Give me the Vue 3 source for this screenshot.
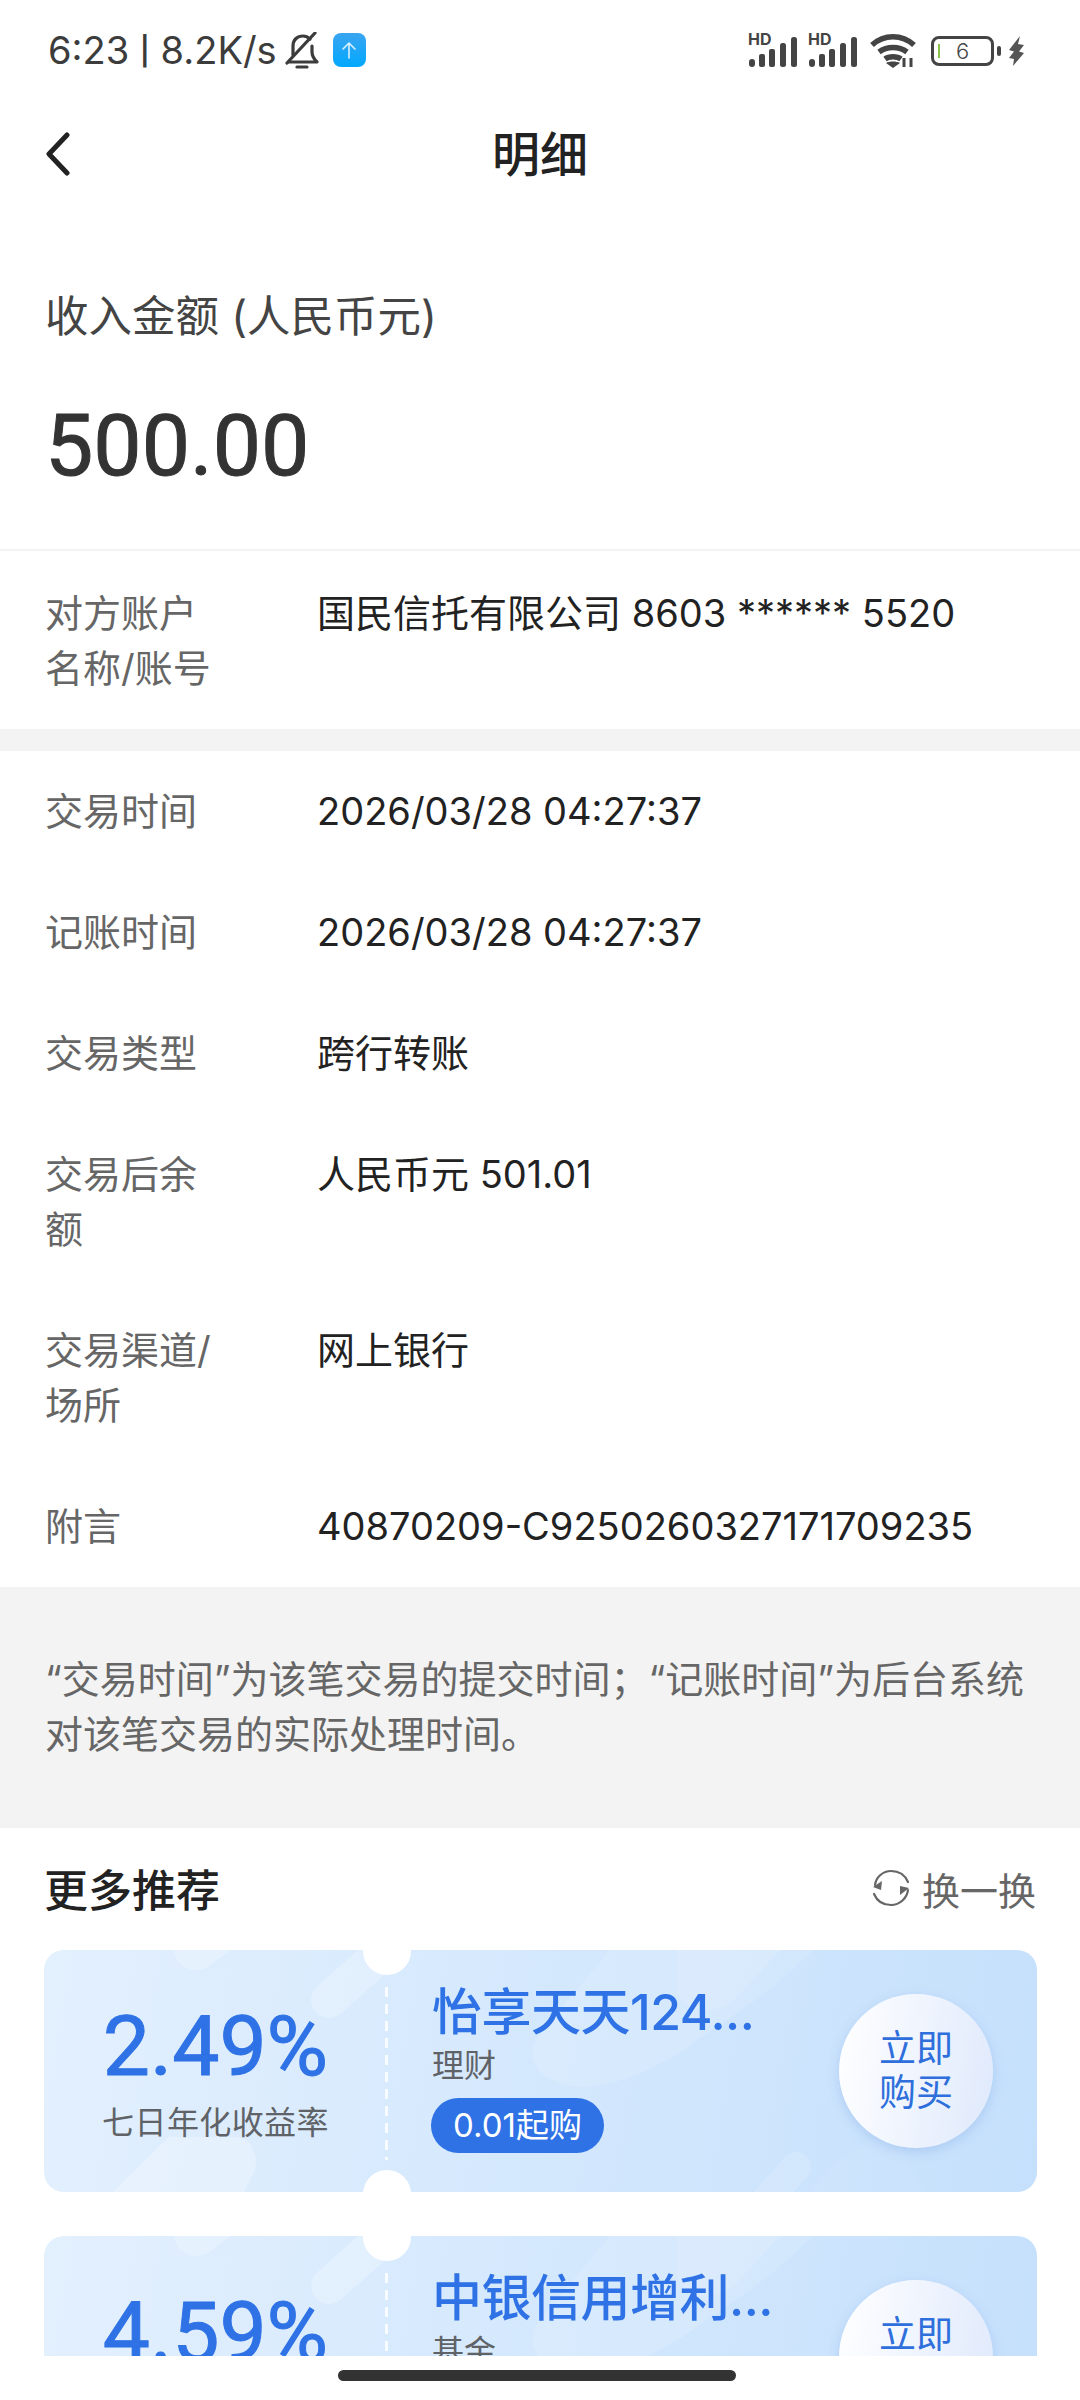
<template>
  <div class="page">
    <div class="status-bar">
      <div class="status-left">
        <span class="status-text">6:23 <span class="status-sep">|</span> 8.2K/s</span>
        <!-- muted bell -->
        <svg class="bell" width="34" height="37" viewBox="0 0 34 37" fill="none" stroke="#3c3c3c" stroke-width="3.2" stroke-linecap="round" stroke-linejoin="round">
          <path d="M4 30h28c-3-3-5-6-5-10v-6" />
          <path d="M8 23v-9C8 8 12 4 18 4c3 0 5 1 7 3" />
          <path d="M30 1L2 31" />
          <path d="M12 35h10" />
        </svg>
        <div class="upload-badge">
          <svg width="20" height="20" viewBox="0 0 20 20" fill="none" stroke="#d9f1ff" stroke-width="1.6" stroke-linecap="round" stroke-linejoin="round">
            <path d="M10 18V3M4 9l6-6 6 6" />
          </svg>
        </div>
      </div>
      <div class="status-right">
        <div v-for="n in 2" :key="n" class="signal">
          <span class="hd">HD</span>
          <svg width="48" height="30" viewBox="0 0 48 30" fill="#444">
            <rect x="0" y="22" width="6" height="8" rx="3" />
            <rect x="10" y="17" width="6" height="13" rx="2" />
            <rect x="20" y="12" width="6" height="18" rx="2" />
            <rect x="31" y="6" width="6" height="24" rx="2.5" />
            <rect x="42" y="0" width="6" height="30" rx="2.5" />
          </svg>
        </div>
        <svg class="wifi" width="46" height="34" viewBox="0 0 46 34" fill="none" stroke="#444" stroke-width="5.5">
          <path d="M2 11c12-11 30-11 42 0" />
          <path d="M9 18c8-6 20-6 28 0" />
          <path d="M15 25c4-3 12-3 16 0" />
          <path d="M23 34l-7-5c3-2 11-2 14 0z" fill="#444" stroke="none" />
          <path d="M34 24v9M41 24v9" stroke-width="3" />
        </svg>
        <div class="battery">
          <span class="battery-level"></span>
          <span class="battery-num">6</span>
          <span class="battery-cap"></span>
        </div>
        <svg class="bolt" width="17" height="30" viewBox="0 0 17 30" fill="#555">
          <path d="M12 0L1 14l5 1.5L1 22l5 1-1 7 11-13-5-1.5L16 9l-6-1z" />
        </svg>
      </div>
    </div>

    <div class="nav">
      <svg class="back" width="24" height="44" viewBox="0 0 24 44" fill="none" stroke="#222" stroke-width="5" stroke-linecap="round" stroke-linejoin="round">
        <path d="M21 3L3 22l18 19" />
      </svg>
      <h1 class="nav-title">明细</h1>
    </div>

    <section class="amount">
      <p class="amount-label">收入金额 (人民币元)</p>
      <p class="amount-value">500.00</p>
    </section>

    <section class="rows first-rows">
      <div class="row">
        <span class="row-label">对方账户<br />名称/账号</span>
        <span class="row-value">国民信托有限公司 8603 ****** 5520</span>
      </div>
    </section>

    <section class="rows detail-rows">
      <div v-for="row in rows" :key="row.label" class="row">
        <span class="row-label" v-html="row.label"></span>
        <span class="row-value">{{ row.value }}</span>
      </div>
    </section>

    <p class="note">“交易时间”为该笔交易的提交时间；“记账时间”为后台系统对该笔交易的实际处理时间。</p>

    <section class="recommend">
      <div class="recommend-head">
        <h2>更多推荐</h2>
        <div class="refresh">
          <svg width="38" height="38" viewBox="0 0 38 38" fill="none" stroke="#666" stroke-width="2.2" stroke-linecap="round">
            <path d="M3 16C4 8 11 2 19 2c8 0 14 4 17 11" />
            <path d="M36 21c-1 8-8 15-17 15-8 0-14-4-17-11" />
            <path d="M1 18l9-6-1 9z" fill="#666" stroke="none" />
            <path d="M37 19l-9 7 0-9z" fill="#666" stroke="none" />
          </svg>
          <span>换一换</span>
        </div>
      </div>

      <div v-for="card in cards" :key="card.name" class="card">
        <svg class="card-bg" width="993" height="242" viewBox="0 0 993 242" fill="#fff">
          <line x1="152" y1="-2" x2="190" y2="-30" stroke="#fff" stroke-width="44" stroke-linecap="round" opacity=".22" />
          <line x1="285" y1="50" x2="350" y2="-8" stroke="#fff" stroke-width="36" stroke-linecap="round" opacity=".24" />
          <path d="M69 242l56-55h66c16 0 24 18 20 33l-11 22z" opacity=".26" />
          <path d="M566 0h203c-49 50-89 70-129 100-40 25-70 35-100 37-35 0-65-22-45-52z" opacity=".13" />
          <path d="M633 0h103l-46 50c-25 20-60 10-57-20z" opacity=".12" />
          <line x1="752" y1="217" x2="712" y2="262" stroke="#fff" stroke-width="30" stroke-linecap="round" opacity=".14" />
          <path d="M765 242l35-37 50-25 30 62z" opacity=".05" />
        </svg>
        <span class="notch notch-top"></span>
        <span class="notch notch-bottom"></span>
        <div class="card-rate">
          <span class="rate">{{ card.rate }}</span>
          <span class="rate-label">七日年化收益率</span>
        </div>
        <div class="card-info">
          <span class="card-name">{{ card.name }}</span>
          <span class="card-type">{{ card.type }}</span>
          <span class="card-min">0.01起购</span>
        </div>
        <div class="buy">立即<br />购买</div>
      </div>
    </section>

    <div class="home-bar"><span class="home-indicator"></span></div>
  </div>
</template>

<script setup>
const rows = [
  { label: '交易时间', value: '2026/03/28 04:27:37' },
  { label: '记账时间', value: '2026/03/28 04:27:37' },
  { label: '交易类型', value: '跨行转账' },
  { label: '交易后余<br />额', value: '人民币元 501.01' },
  { label: '交易渠道/<br />场所', value: '网上银行' },
  { label: '附言', value: '40870209-C9250260327171709235' }
]

const cards = [
  { rate: '2.49%', name: '怡享天天124...', type: '理财' },
  { rate: '4.59%', name: '中银信用增利...', type: '基金' }
]
</script>

<style scoped>
.page {
  position: relative;
  width: 1080px;
  height: 2400px;
  overflow: hidden;
  background: #fff;
  font-family: Inter, "Noto Sans CJK SC", sans-serif;
  color: #222;
}

.status-bar {
  height: 100px;
  padding: 0 48px;
  display: flex;
  align-items: center;
  justify-content: space-between;
  box-sizing: border-box;
}

.status-left {
  display: flex;
  align-items: center;
}

.status-text {
  font-size: 38px;
  color: #3c3c3c;
}

.status-sep {
  font-size: 28px;
  font-weight: 600;
  vertical-align: 3px;
}

.bell {
  margin-left: 8px;
}

.upload-badge {
  width: 33px;
  height: 34px;
  margin-left: 14px;
  border-radius: 8px;
  background: linear-gradient(#3aa5f0, #02a8ff);
  display: flex;
  align-items: center;
  justify-content: center;
}

.status-right {
  display: flex;
  align-items: center;
  margin-right: 7px;
}

.signal {
  position: relative;
  width: 48px;
  height: 30px;
  margin-right: 12px;
  margin-top: 3px;
}

.hd {
  position: absolute;
  left: -1px;
  top: -7px;
  font-size: 16px;
  line-height: 18px;
  font-weight: 700;
  color: #444;
}

.wifi {
  margin-left: 1px;
  margin-top: 2px;
}

.battery {
  position: relative;
  width: 63px;
  height: 30px;
  margin: 2px 14px 0 15px;
  border: 3px solid #444;
  border-radius: 8px;
  box-sizing: border-box;
  display: flex;
  align-items: center;
  justify-content: center;
}

.battery-level {
  position: absolute;
  left: 4px;
  top: 5px;
  width: 2px;
  height: 14px;
  background: #8bc34a;
}

.battery-num {
  font-size: 22px;
  color: #444;
  font-weight: 300;
}

.battery-cap {
  position: absolute;
  right: -10px;
  top: 7px;
  width: 4px;
  height: 10px;
  border-radius: 2px;
  background: #444;
}

.bolt {
  margin-top: 2px;
}

.nav {
  position: relative;
  height: 110px;
  padding-bottom: 8px;
  box-sizing: border-box;
  display: flex;
  align-items: center;
  justify-content: center;
}

.back {
  position: absolute;
  left: 46px;
  top: 32px;
}

.nav-title {
  margin: 0;
  font-size: 48px;
  font-weight: 500;
  color: #222;
}

.amount {
  padding: 67px 45px 0;
  height: 341px;
  box-sizing: border-box;
  border-bottom: 2px solid #f3f3f3;
}

.amount-label {
  margin: 0;
  font-size: 43.5px;
  line-height: 78px;
  color: #444;
}

.amount-value {
  margin: 41px 0 0;
  font-family: Roboto, sans-serif;
  font-size: 86px;
  line-height: 100px;
  font-weight: 400;
  -webkit-text-stroke: 1px #333;
  color: #333;
}

.rows {
  padding: 0 45px;
}

.first-rows {
  height: 200px;
  padding-top: 35px;
  box-sizing: border-box;
  border-bottom: 22px solid #f3f3f3;
}

.detail-rows {
  padding-top: 33px;
  height: 836px;
  box-sizing: border-box;
}

.row {
  display: flex;
  margin-bottom: 66px;
  font-size: 38px;
  line-height: 55px;
}

.row-label {
  width: 272px;
  flex: none;
  color: #666;
}

.row-value {
  color: #222;
}

.note {
  margin: 0;
  height: 241px;
  box-sizing: border-box;
  padding: 65px 45px 0;
  background: #f3f3f3;
  font-size: 38px;
  line-height: 55px;
  color: #666;
}

.recommend {
  padding: 0 44px;
}

.recommend-head {
  height: 120px;
  margin-bottom: 2px;
  display: flex;
  align-items: center;
  justify-content: space-between;
}

.recommend-head h2 {
  margin: 0;
  font-size: 44px;
  font-weight: 500;
  color: #222;
}

.refresh {
  display: flex;
  align-items: center;
  gap: 12px;
  font-size: 38px;
  color: #666;
}

.card {
  position: relative;
  width: 993px;
  height: 242px;
  margin-bottom: 44px;
  border-radius: 20px;
  overflow: hidden;
  background: linear-gradient(100deg, #e3f0fe, #c5e0fc);
  display: flex;
  align-items: center;
}

.card-bg {
  position: absolute;
  left: 0;
  top: 0;
}

.notch {
  position: absolute;
  left: 319px;
  width: 48px;
  height: 48px;
  border-radius: 50%;
  background: #fff;
}

.notch-top {
  top: -23px;
}

.notch-bottom {
  bottom: -26px;
}

.card-rate {
  position: relative;
  width: 343px;
  height: 100%;
  flex: none;
  padding-top: 47px;
  box-sizing: border-box;
  display: flex;
  flex-direction: column;
  align-items: center;
}

.card-rate::after {
  content: "";
  position: absolute;
  right: -1px;
  top: 37px;
  bottom: 32px;
  width: 3px;
  background: repeating-linear-gradient(rgba(255, 255, 255, .85) 0 10px, transparent 10px 17px);
}

.rate {
  font-family: Roboto, sans-serif;
  font-size: 84px;
  line-height: 100px;
  font-weight: 400;
  -webkit-text-stroke: 1px #2e72e6;
  color: #2e72e6;
}

.rate-label {
  margin-top: 4px;
  font-size: 32px;
  line-height: 44px;
  letter-spacing: .4px;
  color: #5f6368;
}

.card-info {
  position: relative;
  flex: 1;
  height: 100%;
  padding: 30px 0 0 45px;
  box-sizing: border-box;
  display: flex;
  flex-direction: column;
  align-items: flex-start;
}

.card-name {
  font-size: 50px;
  line-height: 64px;
  font-weight: 500;
  letter-spacing: -.5px;
  color: #2e72e6;
}

.card-type {
  font-size: 32px;
  line-height: 44px;
  color: #5f6368;
}

.card-min {
  margin-top: 10px;
  margin-left: -1px;
  padding: 0 22px;
  height: 55px;
  border-radius: 28px;
  background: #2e72e6;
  color: #fff;
  font-size: 33px;
  line-height: 55px;
}

.buy {
  position: relative;
  flex: none;
  width: 154px;
  height: 154px;
  margin-right: 44px;
  border-radius: 50%;
  background: linear-gradient(100deg, #fff, #dfe9fc);
  box-shadow: 0 4px 12px rgba(90, 140, 220, .25);
  display: flex;
  align-items: center;
  justify-content: center;
  text-align: center;
  font-size: 37px;
  line-height: 44px;
  color: #2e6fdc;
}

.home-bar {
  position: absolute;
  left: 0;
  right: 0;
  bottom: 0;
  height: 44px;
  background: #fff;
  display: flex;
  justify-content: center;
  padding-top: 14px;
  box-sizing: border-box;
}

.home-indicator {
  width: 398px;
  height: 11px;
  margin-left: -6px;
  border-radius: 6px;
  background: #333;
}
</style>
